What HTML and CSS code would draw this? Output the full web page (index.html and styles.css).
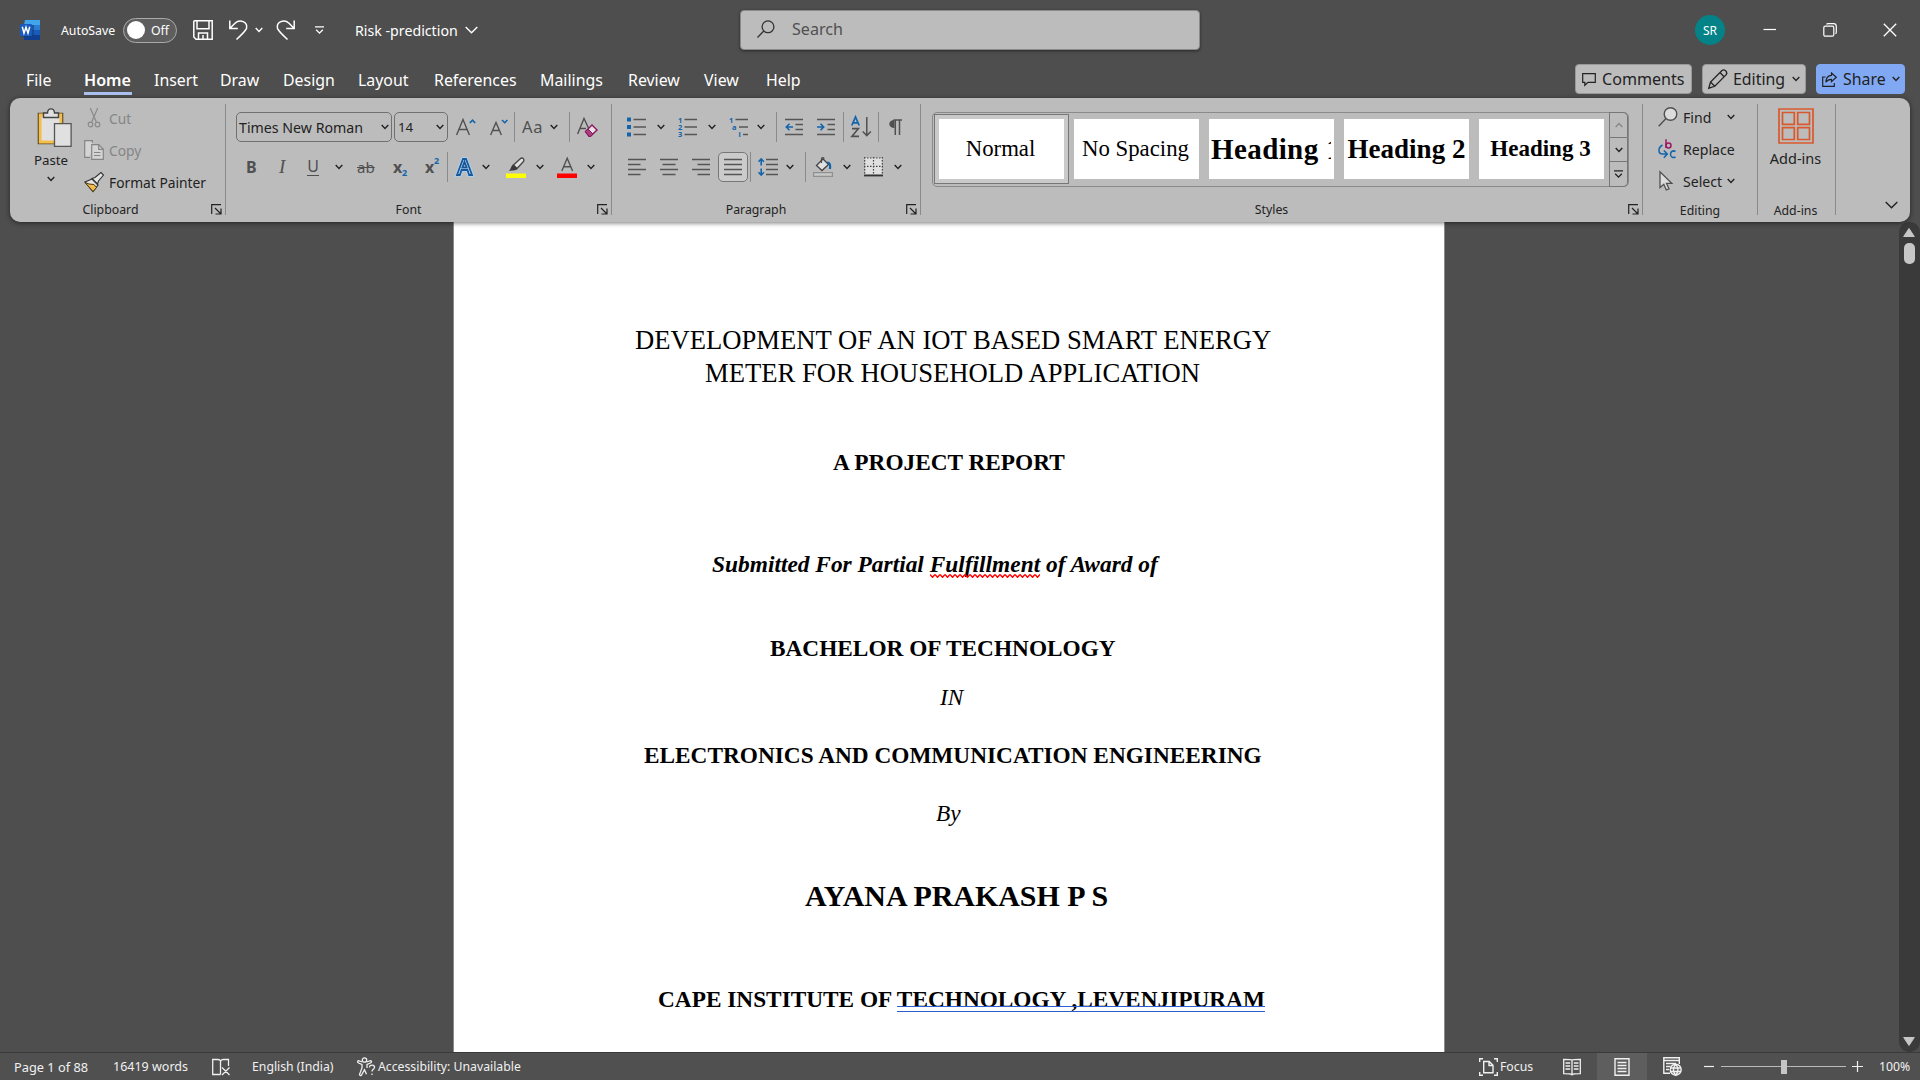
FILE: index.html
```html
<!DOCTYPE html>
<html lang="en">
<head>
<meta charset="utf-8">
<title>Risk -prediction - Word</title>
<link rel="stylesheet" href="styles.css">
</head>
<body>
<svg class="defs" aria-hidden="true">
  <symbol id="chev" viewBox="0 0 8 6"><path d="M.7 1 4 4.4 7.3 1" fill="none" stroke="currentColor" stroke-width="1.4"/></symbol>
  <symbol id="launch" viewBox="0 0 11 11"><path d="M.7 10V.7H10M4 4l5.500 5.500M10 4.500V10H4.500" fill="none" stroke="currentColor" stroke-width="1.2"/></symbol>
</svg>
<div class="app">
  <header class="titlebar">
    <div class="quick">
      <svg class="i20" viewBox="0 0 20 20"><path d="M5 0h14.500a.5.5 0 0 1 .5.5V5H4z" fill="#41a5ee"/><path d="M4 5h16v5H4z" fill="#2b7cd3"/><path d="M4 10h16v5H4z" fill="#185abd"/><path d="M4 15h16v4.500a.5.5 0 0 1-.5.5H4.500a.5.5 0 0 1-.5-.5z" fill="#103f91"/><rect x="1" y="5" width="13" height="12" fill="#124078" opacity=".6"/><rect y="4" width="12" height="12" rx="1" fill="#185abd"/><path d="M2.300 6.700 4 13.200 6 7.200l2 6 1.700-6.500" fill="none" stroke="#fff" stroke-width="1.5"/></svg>
      <span>AutoSave</span>
      <div class="toggle"><i></i><span>Off</span></div>
      <svg class="i20" viewBox="0 0 20 20" fill="none" stroke="#fff" stroke-width="1.5"><path d="M.8 1.500a.8.8 0 0 1 .8-.8h17.600v18.500H3L.8 17zM4 .8v8h12v-8M5.500 19v-6h9v6M10 15v4"/></svg>
      <svg class="i20" viewBox="0 0 20 20" fill="none" stroke="#fff" stroke-width="1.500"><path d="M.8.5v8h8M1 8.300 6 3.200C11-1.500 19 2 17.500 8.500 17 10.500 15.500 12 7.500 19.500"/></svg>
      <svg class="chev" color="#fff"><use href="#chev"/></svg>
      <svg class="i20" viewBox="0 0 20 20" fill="none" stroke="#fff" stroke-width="1.500"><path d="M18.200.5v8h-8M18 8.300 13 3.200C8-1.500 0 2 1.500 8.500 2 10.500 3.500 12 11.500 19.500"/></svg>
      <svg class="more" viewBox="0 0 9 8" fill="none" stroke="#fff" stroke-width="1.300"><path d="M0 .8h9M1.200 3.800l3.300 3.300 3.300-3.300"/></svg>
      <span class="docname">Risk -prediction</span>
      <svg class="bigchev" viewBox="0 0 13 8" fill="none" stroke="#fff" stroke-width="1.400"><path d="M.7 1l5.800 5.800L12.300 1"/></svg>
    </div>
    <div class="search">
      <svg viewBox="0 0 18 18" fill="none" stroke="#333" stroke-width="1.300"><circle cx="11" cy="6.800" r="5.900"/><path d="M6.800 11 .5 17.500"/></svg>
      <span>Search</span>
    </div>
    <div class="window-controls">
      <span class="avatar">SR</span>
      <svg viewBox="0 0 14 14" stroke="#fff" stroke-width="1.200"><path d="M.5 6.500h12.500"/></svg>
      <svg viewBox="0 0 14 14" fill="none" stroke="#fff" stroke-width="1.200"><rect x=".8" y="3.200" width="10" height="10" rx="1.500"/><path d="M3.500 1.300C4 .8 4.500.7 5 .7h5.500c2 0 2.800 1 2.800 2.800V9c0 .8-.3 1.500-.8 1.800"/></svg>
      <svg viewBox="0 0 14 14" stroke="#fff" stroke-width="1.300"><path d="M.8.8l12.400 12.400M13.200.8.8 13.200"/></svg>
    </div>
  </header>

  <nav class="tabs">
    <div class="tablist">
      <span>File</span><span class="active">Home</span><span>Insert</span><span>Draw</span><span>Design</span><span>Layout</span><span>References</span><span>Mailings</span><span>Review</span><span>View</span><span>Help</span>
    </div>
    <div class="actions">
      <div class="btn comments"><svg width="14" height="13" viewBox="0 0 14 13" fill="none" stroke="#222" stroke-width="1.200"><path d="M.7.7h12.600v8.600H6L2.800 12.300v-3H.7z"/></svg><span>Comments</span></div>
      <div class="btn editing"><svg width="20" height="20" viewBox="0 0 20 20" fill="none" stroke="#222" stroke-width="1.300"><path d="M.8 19.200 2.500 13 14 1.500c2.500-2 6 1.500 4.200 4.200L6.800 17.300zM12 3.500 16.300 8M2.500 13l4.300 4.300"/></svg><span>Editing</span><svg class="chev"><use href="#chev"/></svg></div>
      <div class="btn share"><svg width="15" height="15" viewBox="0 0 15 15" fill="none" stroke="#222" stroke-width="1.200"><path d="M3.500 5H.7v9.300h11.600V11M9.500 1l4.800 4.300-4.800 4.400V7.300C7 7.300 5.200 8 3.800 10.300 4 6 6 3.500 9.500 3.300z"/></svg><span>Share</span><svg class="chev"><use href="#chev"/></svg></div>
    </div>
  </nav>

  <section class="ribbon">
    <div class="group clipboard">
      <div class="clip-body">
        <div class="paste">
          <svg width="36" height="39" viewBox="0 0 36 39"><path d="M2.500 5.500h24v30h-24z" fill="#e0e0e0" stroke="#5a4a20" stroke-width="1.600"/><path d="M4.200 7h20.600v27H4.200z" fill="none" stroke="#f4bd4c" stroke-width="2.800"/><path d="M7.500 9.500V5h4c.3-5.500 6.700-5.500 7 0h4v4.500z" fill="#e0e0e0" stroke="#444" stroke-width="1.400"/><path d="M18.500 15.700h16.600v22.600H18.500z" fill="#e0e0e0" stroke="#555" stroke-width="1.300"/></svg>
          <span>Paste</span>
          <svg class="chev"><use href="#chev"/></svg>
        </div>
        <div class="clip-list">
          <div class="off"><svg class="i20" viewBox="0 0 20 20" fill="none" stroke="#8a8a8a" stroke-width="1.200"><path d="M6.300 0l6 14M13.700 0l-6 14"/><circle cx="6.500" cy="16.500" r="2.300"/><circle cx="13.500" cy="16.500" r="2.300"/></svg><span>Cut</span></div>
          <div class="off"><svg class="i20" viewBox="0 0 20 20" fill="#d4d4d4" stroke="#858585" stroke-width="1.200"><path d="M6 17.300H.7V.7h7.600v2"/><path d="M7.700 4.700h7l4.600 4.600v10H7.700z"/><path d="M14.700 4.700v4.600h4.600M10 12.500h6.500M10 15.500h6.500" fill="none"/></svg><span>Copy</span></div>
          <div><svg class="i20" viewBox="0 0 20 20"><path d="M1 10l7-3 6 6-5 6.500z" fill="#e4e4e4" stroke="#333" stroke-width="1.200"/><path d="M1 10.500l4 1.500 5 .5 2.500 3L9 19.500z" fill="#f0bb4c" stroke="#4a3a10" stroke-width="1"/><path d="M8 6.500l3-1 6-5 2.500 2.500-5 6-1 3z" fill="#e4e4e4" stroke="#333" stroke-width="1.100"/></svg><span>Format Painter</span></div>
        </div>
      </div>
      <footer><span>Clipboard</span><svg class="launch"><use href="#launch"/></svg></footer>
    </div>

    <div class="group font">
      <div class="row font-1">
        <div class="combo name"><span>Times New Roman</span><svg class="chev"><use href="#chev"/></svg></div>
        <div class="combo size"><span>14</span><svg class="chev"><use href="#chev"/></svg></div>
        <svg width="20" height="18" viewBox="0 0 20 18" fill="none" stroke="#505050" stroke-width="1.400"><path d="M.6 17 7 1.500 13.400 17M3 11.500h8"/><path d="M13.800 5 16.500 2.200 19.200 5" stroke="#1264ab" stroke-width="1.600"/></svg>
        <svg width="18" height="18" viewBox="0 0 18 18" fill="none" stroke="#505050" stroke-width="1.400"><path d="M.6 17 6 4.500 11.400 17M2.700 12.500h6.700"/><path d="M12 2l2.700 2.700L17.400 2" stroke="#1264ab" stroke-width="1.600"/></svg>
        <i class="sep"></i>
        <span class="glyph case">Aa</span>
        <svg class="chev"><use href="#chev"/></svg>
        <i class="sep"></i>
        <svg width="22" height="20" viewBox="0 0 22 20" fill="none"><path d="M.6 17 7 1.500 11.500 11M3 11.500h6" stroke="#505050" stroke-width="1.400"/><path d="M8.500 14.500 15 8l5 5-6.500 6.300H12z" fill="#e8e0e5" stroke="#8a1460" stroke-width="1.400"/><path d="M8.500 14.500l2.500-2.500 5 5-2.500 2.300H12z" fill="#a8437f" stroke="#8a1460"/></svg>
      </div>
      <div class="row font-2">
        <b class="glyph">B</b><em class="glyph serif">I</em><span class="glyph under">U</span>
        <svg class="chev"><use href="#chev"/></svg>
        <span class="glyph strike">ab</span>
        <b class="glyph sub">x<small>2</small></b>
        <b class="glyph sup">x<small>2</small></b>
        <i class="sep"></i>
        <svg width="19" height="20" viewBox="0 0 19 20" fill="none"><path d="M2 18 8 2h3l6 16h-2.800l-1.700-5h-6l-1.700 5z" stroke="#a9d3f3" stroke-width="3.600"/><path d="M2 18 8 2h3l6 16h-2.800l-1.700-5h-6l-1.700 5zM7.300 10.500h4.400L9.500 4.500z" fill="#d6e9f8" stroke="#16589a" stroke-width="1.800"/></svg>
        <svg class="chev"><use href="#chev"/></svg>
        <svg width="20" height="21" viewBox="0 0 20 21"><path d="M0 16.500h20v4.500H0z" fill="#ff0"/><path d="M7.500 8 14 2c2.500-2.500 5.500.5 3 3l-6 6.500z" fill="#e0e0e0" stroke="#444" stroke-width="1.300"/><path d="M7 7.500l4.500 4.300c-1.500 2-4 1.500-8.500 2.200C5 12 5 9 7 7.500z" fill="#3a3a3a"/></svg>
        <svg class="chev"><use href="#chev"/></svg>
        <svg width="20" height="21" viewBox="0 0 20 21" fill="none"><path d="M0 16.500h20v4.500H0z" fill="#f00"/><path d="M4.800 14 10.200 1.300 15.600 14M6.700 9.700h7" stroke="#505050" stroke-width="1.400"/></svg>
        <svg class="chev"><use href="#chev"/></svg>
      </div>
      <footer><span>Font</span><svg class="launch"><use href="#launch"/></svg></footer>
    </div>

    <div class="group paragraph">
      <div class="row para-1">
        <svg class="i20" viewBox="0 0 20 20"><path d="M6.500 2.500H19M6.500 10H19M6.500 17.500H19" stroke="#555" stroke-width="1.600"/><path d="M0 .5h4v4H0zM0 8h4v4H0zM0 15.500h4v4H0z" fill="#1264ab"/></svg>
        <svg class="chev"><use href="#chev"/></svg>
        <svg class="i20" viewBox="0 0 20 20"><path d="M6.500 2.500H19M6.500 10H19M6.500 17.500H19" stroke="#555" stroke-width="1.600"/><g class="num"><text x="0" y="5.500">1</text><text x="0" y="13">2</text><text x="0" y="20">3</text></g></svg>
        <svg class="chev"><use href="#chev"/></svg>
        <svg class="i20" viewBox="0 0 20 20"><path d="M6.500 2.500H19M10 10h9M14 17.500h5" stroke="#555" stroke-width="1.600"/><g class="num"><text x="0" y="5.500">1</text><text x="3" y="13">a</text><text x="9.500" y="20">i</text></g></svg>
        <svg class="chev"><use href="#chev"/></svg>
        <i class="sep"></i>
        <svg width="19" height="18" viewBox="0 0 19 18" fill="none" stroke="#555" stroke-width="1.600"><path d="M0 1.500h18M10.500 6.500H18M10.500 11.500H18M0 16.500h18"/><path d="M8 9H1.500M4.500 5.800 1.300 9l3.200 3.200" stroke="#1264ab"/></svg>
        <svg width="19" height="18" viewBox="0 0 19 18" fill="none" stroke="#555" stroke-width="1.600"><path d="M0 1.500h18M10.500 6.500H18M10.500 11.500H18M0 16.500h18"/><path d="M0 9h6.500M3.500 5.800 6.700 9l-3.200 3.200" stroke="#1264ab"/></svg>
        <i class="sep"></i>
        <svg width="21" height="22" viewBox="0 0 21 22" fill="none" stroke-width="1.700"><path d="M.8 9.500 4.500 1l3.700 8.500M2 6.800h5" stroke="#1264ab"/><path d="M1 12.700h6.300L1 20.300h7" stroke="#505050"/><path d="M15.800 1v18.500M11.800 15.500l4 4.200 4-4.200" stroke="#505050" stroke-width="1.500"/></svg>
        <i class="sep"></i>
        <svg width="14" height="17" viewBox="0 0 14 17"><path d="M5.500 1C-1.500 1-1.500 9 5.500 9z" fill="#505050"/><path d="M4.500 1H13M6.300 1v15M10.500 1v15" stroke="#505050" stroke-width="1.500"/></svg>
      </div>
      <div class="row para-2">
        <svg width="18" height="18" viewBox="0 0 18 18" stroke="#555" stroke-width="1.500"><path d="M0 1.500h18M0 6.500h12.500M0 11.500h18M0 16.500h12.500"/></svg>
        <svg width="18" height="18" viewBox="0 0 18 18" stroke="#555" stroke-width="1.500"><path d="M0 1.500h18M2.500 6.500h13M0 11.500h18M2.500 16.500h13"/></svg>
        <svg width="18" height="18" viewBox="0 0 18 18" stroke="#555" stroke-width="1.500"><path d="M0 1.500h18M5.500 6.500H18M0 11.500h18M5.500 16.500H18"/></svg>
        <div class="pressed"><svg width="18" height="18" viewBox="0 0 18 18" stroke="#555" stroke-width="1.500"><path d="M0 1.500h18M0 6.500h18M0 11.500h18M0 16.500h18"/></svg></div>
        <i class="sep"></i>
        <svg width="20" height="18" viewBox="0 0 20 18" fill="none" stroke="#555" stroke-width="1.500"><path d="M8 1.500h12M8 6.500h12M8 11.500h12M8 16.500h12"/><path d="M3.200 1v6.500M.5 3.700 3.200 1l2.700 2.700M3.200 10.500V17M.5 14.300 3.200 17l2.700-2.700" stroke="#1264ab" stroke-width="1.600"/></svg>
        <svg class="chev"><use href="#chev"/></svg>
        <i class="sep"></i>
        <svg width="20" height="20" viewBox="0 0 20 20"><path d="M.6 15.600h18.800v3.800H.6z" fill="#c9c9c9" stroke="#909090" stroke-width="1.200"/><path d="M3.500 8.500 10 2l5.500 5.500L9 13.500z" fill="#e0e0e0" stroke="#444" stroke-width="1.300"/><path d="M8.500 6V2c0-2 2.500-2 2.500 0" fill="none" stroke="#444" stroke-width="1.200"/><path d="M14 5.500c3 0 3.500 2 3 6.500" fill="none" stroke="#1264ab" stroke-width="2.200"/></svg>
        <svg class="chev"><use href="#chev"/></svg>
        <svg width="19" height="20" viewBox="0 0 19 20" fill="none"><path d="M1 1h17v16H1z" fill="#e0e0e0"/><path d="M.7 0v18M18.300 0v18M0 1h19M9.500 0v18M0 9.300h19" stroke="#444" stroke-width="1.200" stroke-dasharray="1.500 1.500"/><path d="M0 18.500h19" stroke="#333" stroke-width="1.800"/></svg>
        <svg class="chev"><use href="#chev"/></svg>
      </div>
      <footer><span>Paragraph</span><svg class="launch"><use href="#launch"/></svg></footer>
    </div>

    <div class="group styles">
      <div class="gallery">
        <div class="style selected"><span>Normal</span></div>
        <div class="style"><span>No Spacing</span></div>
        <div class="style h1"><span>Heading 1</span></div>
        <div class="style h2"><span>Heading 2</span></div>
        <div class="style h3"><span>Heading 3</span></div>
        <div class="scroller">
          <i><svg class="chev flip"><use href="#chev"/></svg></i>
          <i><svg class="chev"><use href="#chev"/></svg></i>
          <i><svg width="9" height="8" viewBox="0 0 9 8" fill="none" stroke="#222" stroke-width="1.300"><path d="M0 .8h9M1.200 3.800l3.300 3.300 3.300-3.300"/></svg></i>
        </div>
      </div>
      <footer><span>Styles</span><svg class="launch"><use href="#launch"/></svg></footer>
    </div>

    <div class="group edit">
      <div class="edit-list">
        <div><svg class="i20" viewBox="0 0 20 20" fill="none" stroke="#505050" stroke-width="1.400"><circle cx="12.500" cy="7" r="6.300" fill="#dcdcdc"/><path d="M8 11.500.7 19.300"/></svg><span>Find</span><svg class="chev find"><use href="#chev"/></svg></div>
        <div><svg class="i20" viewBox="0 0 20 20" fill="none"><path d="M4.500 6C-.5 9 0 15 4.500 15h4M5.800 11.500 9.300 15l-3.500 3.700" stroke="#1264ab" stroke-width="1.500"/><path d="M8 .3V9" stroke="#a01464" stroke-width="1.500"/><circle cx="10.500" cy="6.500" r="2.500" stroke="#a01464" stroke-width="1.500"/><path d="M17.500 12.500c-2.500-1.500-5 0-5 2.700s2.500 4.300 5 2.800" stroke="#1264ab" stroke-width="1.500"/></svg><span>Replace</span></div>
        <div><svg class="i20" viewBox="0 0 20 20"><path d="M2 .8v15.700l3.800-3.300 2.500 5.800 2.700-1.200-2.500-5.500h5.300z" fill="#dcdcdc" stroke="#505050" stroke-width="1.300"/></svg><span>Select</span><svg class="chev sel"><use href="#chev"/></svg></div>
      </div>
      <footer><span>Editing</span></footer>
    </div>

    <div class="group addins">
      <div class="addin">
        <svg width="36" height="36" viewBox="0 0 36 36" fill="none" stroke="#d9592c" stroke-width="1.700"><path d="M1 1h34v34H1zM4.500 4.500h11.800v11.800H4.500zM19.700 4.500h11.800v11.800H19.700zM4.500 19.700h11.800v11.800H4.500zM19.700 19.700h11.800v11.800H19.700z"/></svg>
        <span>Add-ins</span>
      </div>
      <footer><span>Add-ins</span></footer>
    </div>
    <div class="collapse"><svg width="13" height="8" viewBox="0 0 13 8" fill="none" stroke="#222" stroke-width="1.400"><path d="M.7 1l5.800 5.800L12.300 1"/></svg></div>
  </section>

  <main class="workspace">
    <article class="page">
      <p class="title">DEVELOPMENT OF AN IOT BASED SMART ENERGY</p>
      <p class="title second">METER FOR HOUSEHOLD APPLICATION</p>
      <p class="report">A PROJECT REPORT</p>
      <p class="submitted">Submitted For Partial <span class="spelling">Fulfillment</span> of Award of</p>
      <p class="degree">BACHELOR OF TECHNOLOGY</p>
      <p class="in">IN</p>
      <p class="branch">ELECTRONICS AND COMMUNICATION ENGINEERING</p>
      <p class="by">By</p>
      <p class="author">AYANA PRAKASH P S</p>
      <p class="college">CAPE INSTITUTE OF <span class="grammar">TECHNOLOGY ,LEVENJIPURAM</span></p>
    </article>
    <div class="scrollbar">
      <div class="top"><svg width="12" height="9" viewBox="0 0 12 9"><path d="M6 .5 11.300 8.500H.7z" fill="#c6c6c6" stroke="#c6c6c6" stroke-linejoin="round"/></svg><i></i></div>
      <svg width="12" height="9" viewBox="0 0 12 9"><path d="M6 8.500 11.300.5H.7z" fill="#c6c6c6" stroke="#c6c6c6" stroke-linejoin="round"/></svg>
    </div>
  </main>

  <footer class="status">
    <div class="status-left">
      <span class="pages">Page 1 of 88</span>
      <span class="words">16419 words</span>
      <svg width="19" height="18" viewBox="0 0 19 18" fill="none" stroke="#f0f0f0" stroke-width="1.300"><path d="M8.500 16.500H.7V1.500h5c1.500 0 2.800.8 2.800 2v13M8.500 3.500c0-1.200 1.500-2 3-2h5V8M10 9.500l7.500 7.500M17.500 9.500 10 17"/></svg>
      <span>English (India)</span>
      <svg width="19" height="20" viewBox="0 0 19 20" fill="none" stroke="#f0f0f0" stroke-width="1.300"><circle cx="7.500" cy="3" r="2.200"/><path d="M5.500 5 1.500 3.700C.3 4 .3 5.500 1.500 6l3.500 1.500v3.500L2.500 17.500c.3 1.300 1.700 1.500 2.200.3l2.800-5 2 4.500M9.500 5l4-1.300c1.300.3 1.300 1.800 0 2.300L10 7.500V11M12.500 10.500c0-3.500 5.500-3 5 0-.3 1.800-2.500 1.800-2.500 4M15 16.500V18"/></svg>
      <span>Accessibility: Unavailable</span>
    </div>
    <div class="status-right">
      <svg width="19" height="18" viewBox="0 0 19 18" fill="none" stroke="#f0f0f0" stroke-width="1.400"><path d="M.7 4V.7H4M15 .7h3.300V4M18.300 14v3.300H15M4 17.300H.7V14M4.700 3.500h5.500l3.800 3.800v7.500H4.700zM10 3.500v4h4"/></svg>
      <span>Focus</span>
      <svg width="18" height="18" viewBox="0 0 18 18" fill="none" stroke="#f0f0f0" stroke-width="1.300"><path d="M9 16.500c-1-.8-2-.8-8.300-.8V1.300C7 1.300 8 1.300 9 2c1-.7 2-.7 8.300-.7v14.400c-6.300 0-7.300 0-8.300.8zM9 2v15.500M2.500 5h4.700M2.500 8h4.700M2.500 11h4.700M10.800 5h4.700M10.800 8h4.700M10.800 11h4.700"/></svg>
      <div class="view-on"><svg width="16" height="18" viewBox="0 0 16 18" fill="none" stroke="#f0f0f0" stroke-width="1.400"><path d="M1 .8h14v16.400H1zM3.500 4.500h9M3.500 7.500h9M3.500 10.500h9M3.500 13.500h9"/></svg></div>
      <svg width="19" height="19" viewBox="0 0 19 19" fill="none" stroke="#f0f0f0" stroke-width="1.400"><path d="M7 16.300H.8V.8h15.500V7M.8 3.500h15.500M3 6.500h10M3 9.500h4.500M3 12.500h3"/><circle cx="12.700" cy="12.700" r="5.500" fill="#666"/><path d="M7.500 11h10.500M7.500 14.500h10.500M12.700 7.200c-3 3-3 8 0 11 3-3 3-8 0-11z"/></svg>
      <svg width="10" height="11" viewBox="0 0 10 11" stroke="#f0f0f0" stroke-width="1.200"><path d="M0 5.500h10"/></svg>
      <div class="slider"><i></i></div>
      <svg width="11" height="11" viewBox="0 0 11 11" stroke="#f0f0f0" stroke-width="1.200"><path d="M0 5.500h11M5.500 0v11"/></svg>
      <span>100%</span>
    </div>
  </footer>
</div>
</body>
</html>
```
FILE: styles.css
```css
* { box-sizing: border-box; }
body { margin: 0; background: #4e4e4e; font-family: "Noto Sans", sans-serif; color: #222; }
.defs { display: none; }
svg { display: block; flex: none; overflow: visible; }
span { white-space: nowrap; }
.app { width: 1920px; height: 1080px; display: flex; flex-direction: column; overflow: hidden; }
.i20 { width: 20px; height: 20px; }
.chev { width: 8px; height: 6px; }
.launch { width: 11px; height: 11px; }

/* Title bar */
.titlebar { height: 60px; display: flex; align-items: center; color: #fff; }
.quick { width: 740px; padding-left: 20px; display: grid; grid-template-columns: 41px 62px 70px 36px 26px 21px 39px 40px 110px auto; align-items: center; font-size: 12.3px; }
.toggle { width: 54px; height: 25px; border: 1px solid #aaa; border-radius: 13px; background: #5e5e5e; display: flex; align-items: center; gap: 6px; padding-left: 3px; }
.toggle i { width: 18px; height: 18px; border-radius: 50%; background: #fff; }
.more { width: 9px; height: 8px; }
.docname { font-size: 14.2px; }
.bigchev { width: 13px; height: 8px; }
.search { width: 460px; height: 40px; background: #bcbcbc; border: 1px solid #8a8a8a; border-radius: 4px; box-shadow: 0 1px 3px rgba(0,0,0,.5); display: flex; align-items: center; gap: 17px; padding-left: 16px; padding-bottom: 2px; color: #505050; font-size: 16.1px; }
.search svg { width: 18px; height: 18px; }
.window-controls { margin-left: 495px; display: grid; grid-template-columns: 68px 60px 60px 14px; align-items: center; }
.window-controls svg { width: 14px; height: 14px; }
.avatar { width: 30px; height: 30px; border-radius: 50%; background: #038387; font-size: 12px; display: flex; align-items: center; justify-content: center; }

/* Tabs */
.tabs { height: 38px; display: flex; justify-content: space-between; color: #fff; font-size: 15.9px; }
.tablist { padding-left: 26px; height: 35px; display: grid; grid-template-rows: 35px; grid-template-columns: 58px 70px 66px 63px 75px 76px 106px 88px 76px 62px 40px; line-height: 40px; }
.tablist .active { font-weight: 600; font-size: 16.100px; width: 48px; height: 35px; background: linear-gradient(#aac0f0, #aac0f0) bottom / 100% 3px no-repeat; }
.actions { padding: 4px 15px 0 0; display: flex; gap: 10px; color: #222; }
.btn { height: 30px; display: flex; align-items: center; background: #bcbcbc; border: 1px solid #999; border-radius: 4px; }
.comments { width: 117px; padding-left: 6px; gap: 6px; font-size: 16.1px; }
.editing { width: 104px; padding-left: 5px; gap: 5px; }
.share { width: 89px; padding-left: 5px; gap: 6px; background: #81a9f3; border-color: #81a9f3; }
.btn .chev { margin-left: 2px; }
.share .chev { margin-left: 0; }

/* Ribbon */
.ribbon { position: relative; z-index: 1; height: 124px; flex: none; margin: 0 10px; padding-top: 6px; display: flex; background: #bcbcbc; border-radius: 10px; box-shadow: 0 1px 5px rgba(0,0,0,.55); font-size: 14px; }
.group { height: 111px; padding-top: 8px; border-right: 1px solid #8a8a8a; display: flex; flex-direction: column; }
.group footer { margin-top: auto; height: 11px; display: flex; align-items: center; font-size: 12.3px; padding-right: 3px; }
.group footer span { flex: 1; text-align: center; line-height: 12px; }
.group.font footer span, .paragraph footer span, .styles footer span { padding-right: 6px; }
.clipboard { width: 216px; }
.font { width: 386px; }
.paragraph { width: 309px; }
.styles { width: 722px; }
.edit { width: 115px; }
.addins { width: 78px; }
.edit footer, .addins footer { padding-right: 0; height: 9px; }
.addins footer { padding-right: 2px; }
.row { display: grid; height: 30px; align-items: center; margin-bottom: 10px; }
.row + .row { margin-bottom: 0; }
.sep { width: 1px; height: 30px; background: #8a8a8a; }

.clip-body { display: flex; margin-top: -6px; }
.paste { width: 58px; margin-left: 12px; padding-top: 2px; display: flex; flex-direction: column; align-items: center; font-size: 13.3px; }
.paste > svg:first-child { margin-left: 5px; }
.paste span { line-height: 20px; margin: 3px 0 6px; }
.clip-list { margin: -3px 0 0 4px; font-size: 13.8px; }
.clip-list div { display: flex; align-items: center; gap: 5px; height: 32px; }
.clip-list div:first-child { margin-top: -1px; }
.clip-list .off { color: #858585; }

.font-1 { padding-left: 10px; grid-template-columns: 158px 62px 34px 24px 8px 28px 19px 8px auto; }
.font-2 { padding-left: 20px; grid-template-columns: 33px 28px 28px 21px 37px 32px 22px 8px 27px 24px 30px 21px 30px auto; }
.combo { height: 30px; border: 1px solid #707070; border-radius: 5px; display: flex; align-items: center; justify-content: space-between; padding: 0 2px; font-size: 14.2px; }
.combo.name { width: 156px; }
.combo.size { width: 54px; padding: 0 3px; font-size: 13.3px; }
.glyph { color: #505050; font-size: 16px; line-height: 22px; }
.case { font-size: 16.5px; letter-spacing: .8px; }
.serif { font-family: "Liberation Serif", serif; font-size: 19px; }
.under { border-bottom: 1.5px solid #505050; width: 12px; line-height: 17px; text-align: center; }
.strike { text-decoration: line-through; width: 20px; font-size: 15px; padding-left: 1px; }
.sub, .sup { position: relative; }
.glyph small { position: absolute; left: 9px; font-size: 9px; line-height: 9px; color: #1264ab; }
.sub small { top: 12px; }
.sup small { top: 0; }

.para-1 { padding-left: 15px; grid-template-columns: 30px 21px 30px 21px 28px 19px 9px 32px 26px 8px 27px 11px auto; }
.para-2 { padding-left: 16px; grid-template-columns: 32px 32px 26px 32px 8px 28px 19px 8px 30px 21px 30px auto; }
.num { font: 700 7.5px "Noto Sans", sans-serif; fill: #1264ab; }
.pressed { width: 30px; height: 30px; border: 1px solid #777; border-radius: 5px; background: #cbcbcb; display: flex; align-items: center; justify-content: center; }

.gallery { margin-left: 11px; width: 697px; height: 75px; border: 1px solid #8a8a8a; border-radius: 5px; display: flex; padding-left: 1px; align-items: flex-start; }
.style { width: 135px; height: 70px; margin-top: 1px; padding: 5px; border: 0 solid #777; }
.style.selected { border-width: 1px; padding: 4px; background: #c9c9c9; }
.style span { display: flex; align-items: center; justify-content: center; height: 60px; background: #fff; color: #000; white-space: pre; font-family: "Liberation Serif", serif; font-size: 22.8px; padding-right: 2px; }
.style.h1 span { justify-content: flex-start; overflow: hidden; padding: 0; font-weight: 700; font-size: 29px; letter-spacing: .4px; border: solid #fff; border-width: 0 3px 0 2px; }
.style.h2 span { font-weight: 700; font-size: 27px; padding: 0; }
.style.h3 span { font-weight: 700; font-size: 23px; }
.scroller { width: 19px; height: 75px; margin: -1px -1px 0 0; display: flex; flex-direction: column; }
.scroller i { flex: 1; border: 1px solid #777; border-top-width: 0; display: flex; align-items: center; justify-content: center; }
.scroller i:first-child { border-top-width: 1px; border-top-right-radius: 5px; color: #888; }
.scroller i:last-child { border-bottom-right-radius: 5px; }
.flip { transform: scaleY(-1); }

.edit-list { margin: -11px 0 0 15px; font-size: 14.1px; }
.edit-list div { height: 32px; display: flex; align-items: center; gap: 5px; }
.find { margin-left: 11px; }
.addin { margin: -4px 2px 0 0; display: flex; flex-direction: column; align-items: center; font-size: 14.5px; line-height: 20px; gap: 4px; }
.collapse { flex: 1; display: flex; align-items: flex-end; justify-content: flex-end; padding: 0 12px 13px 0; }

/* Document */
.workspace { flex: 1; min-height: 0; display: flex; }
.page { width: 992px; margin-left: 453px; border: solid #8a8a8a; border-width: 0 1px; background: #fff; color: #000; font-family: "Liberation Serif", serif; font-size: 23.3px; overflow: hidden; }
.page p { margin: 0; line-height: 30px; white-space: nowrap; }
.page .title { font-size: 26.65px; line-height: 33px; padding: 102px 0 0 181px; }
.page .title.second { padding: 0 0 0 251px; }
.page .report { font-weight: 700; padding: 57px 0 0 379px; }
.page .submitted { font-weight: 700; font-style: italic; font-size: 23.4px; padding: 72px 0 0 258px; }
.page .degree { font-weight: 700; padding: 54px 0 0 316px; }
.page .in { font-style: italic; padding: 19px 0 0 486px; }
.page .branch { font-weight: 700; padding: 28px 0 0 190px; }
.page .by { font-style: italic; padding: 28px 0 0 482px; }
.page .author { font-weight: 700; font-size: 29.95px; padding: 53px 0 0 351px; }
.page .college { font-weight: 700; padding: 73px 0 0 204px; }
.spelling, .grammar { position: relative; }
.spelling::after { content: ""; position: absolute; left: 0; right: 0; bottom: -1px; height: 4px; background: url("data:image/svg+xml,%3Csvg xmlns='http://www.w3.org/2000/svg' width='5' height='4'%3E%3Cpath d='M0 .5 2.500 3.300 5 .5' fill='none' stroke='%23f00' stroke-width='1.400'/%3E%3C/svg%3E") repeat-x; }
.grammar::after { content: ""; position: absolute; left: 0; right: 0; bottom: 0; height: 4px; border: solid #2b5fd0; border-width: 1px 0; }
.scrollbar { width: 21px; margin-left: auto; padding: 6px 1px 6px 0; background: #3a3a3a; border-radius: 10px; display: flex; flex-direction: column; align-items: center; justify-content: space-between; }
.scrollbar .top { display: flex; flex-direction: column; align-items: center; gap: 6px; }
.scrollbar i { width: 11px; height: 21px; border-radius: 5px; background: #c6c6c6; }

/* Status bar */
.status { height: 28px; flex: none; border-top: 1px solid #3a3a3a; background: #505050; color: #f0f0f0; font-size: 12.25px; display: flex; justify-content: space-between; }
.status-left { padding-left: 14px; display: grid; grid-template-columns: 99px 99px 40px 105px 21px auto; align-items: center; }
.pages { font-size: 12.8px; }
.words { font-size: 12.5px; }
.status-right { display: grid; grid-template-columns: 21px 63px 34px 66px 41px 17px 131px 27px 41px; align-items: center; }
.view-on { width: 50px; height: 27px; background: #5e5e5e; display: flex; align-items: center; justify-content: center; }
.slider { width: 125px; height: 14px; display: flex; align-items: center; justify-content: center; background: linear-gradient(#bbb, #bbb) center / 100% 1px no-repeat; }
.slider i { width: 6px; height: 14px; background: #c6c6c6; }
```
